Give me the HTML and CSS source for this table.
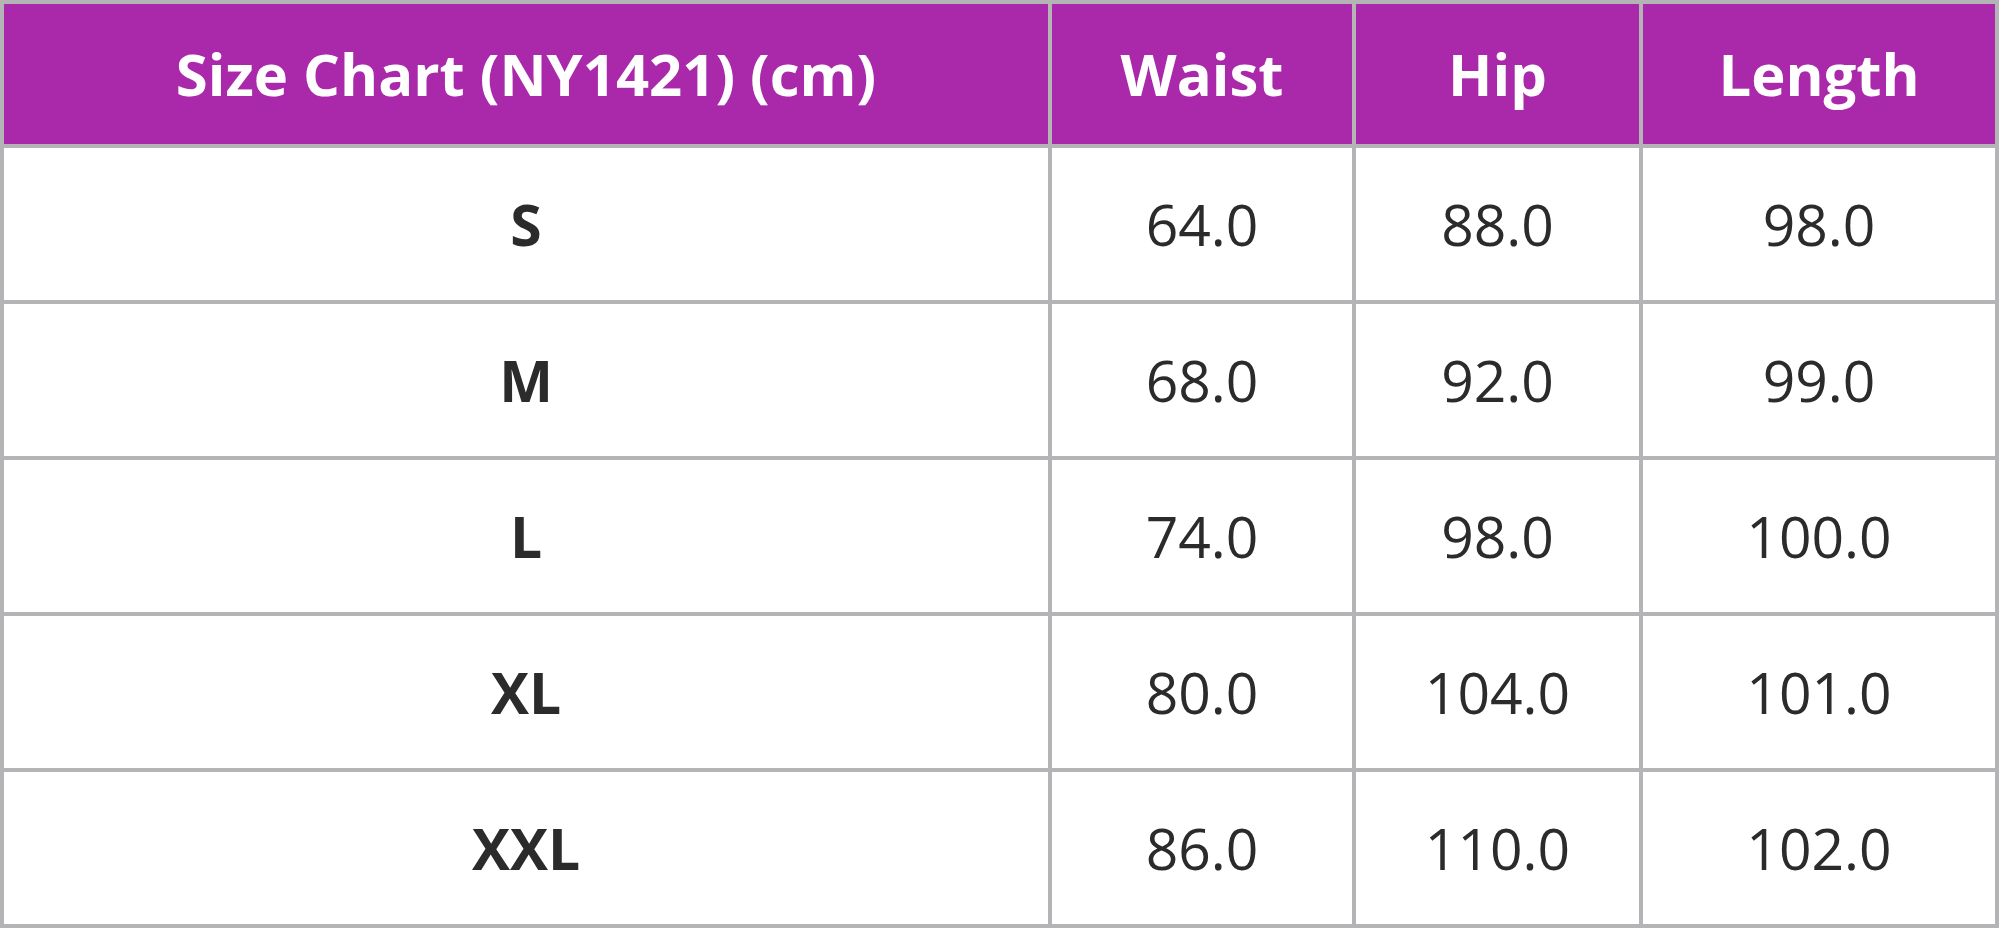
FILE: index.html
```html
<!DOCTYPE html>
<html lang="en">
<head>
<meta charset="utf-8">
<title>Size Chart (NY1421)</title>
<link rel="stylesheet" href="styles.css">
</head>
<body>
<div class="chart" role="table">
  <div class="cell head" role="columnheader">Size Chart (NY1421) (cm)</div>
  <div class="cell head" role="columnheader">Waist</div>
  <div class="cell head" role="columnheader">Hip</div>
  <div class="cell head" role="columnheader">Length</div>

  <div class="cell size">S</div>
  <div class="cell">64.0</div>
  <div class="cell">88.0</div>
  <div class="cell">98.0</div>

  <div class="cell size">M</div>
  <div class="cell">68.0</div>
  <div class="cell">92.0</div>
  <div class="cell">99.0</div>

  <div class="cell size">L</div>
  <div class="cell">74.0</div>
  <div class="cell">98.0</div>
  <div class="cell">100.0</div>

  <div class="cell size">XL</div>
  <div class="cell">80.0</div>
  <div class="cell">104.0</div>
  <div class="cell">101.0</div>

  <div class="cell size">XXL</div>
  <div class="cell">86.0</div>
  <div class="cell">110.0</div>
  <div class="cell">102.0</div>
</div>
</body>
</html>
```
FILE: styles.css
```css
html, body {
  margin: 0;
  padding: 0;
  background: #ffffff;
}

.chart {
  display: grid;
  grid-template-columns: 1044px 300px 283px 352px;
  grid-template-rows: 140px repeat(5, 152px);
  gap: 4px;
  padding: 4px;
  width: 1999px;
  box-sizing: border-box;
  background: #b4b3b5;
  font-family: "Open Sans", "Noto Sans", sans-serif;
}

.cell {
  display: flex;
  align-items: center;
  justify-content: center;
  background: #ffffff;
  color: #2b2b2b;
  font-size: 57px;
  line-height: 1;
}

.head {
  background: #aa28aa;
  color: #ffffff;
  font-weight: 700;
  font-size: 58px;
}

.size {
  font-weight: 700;
}
```
